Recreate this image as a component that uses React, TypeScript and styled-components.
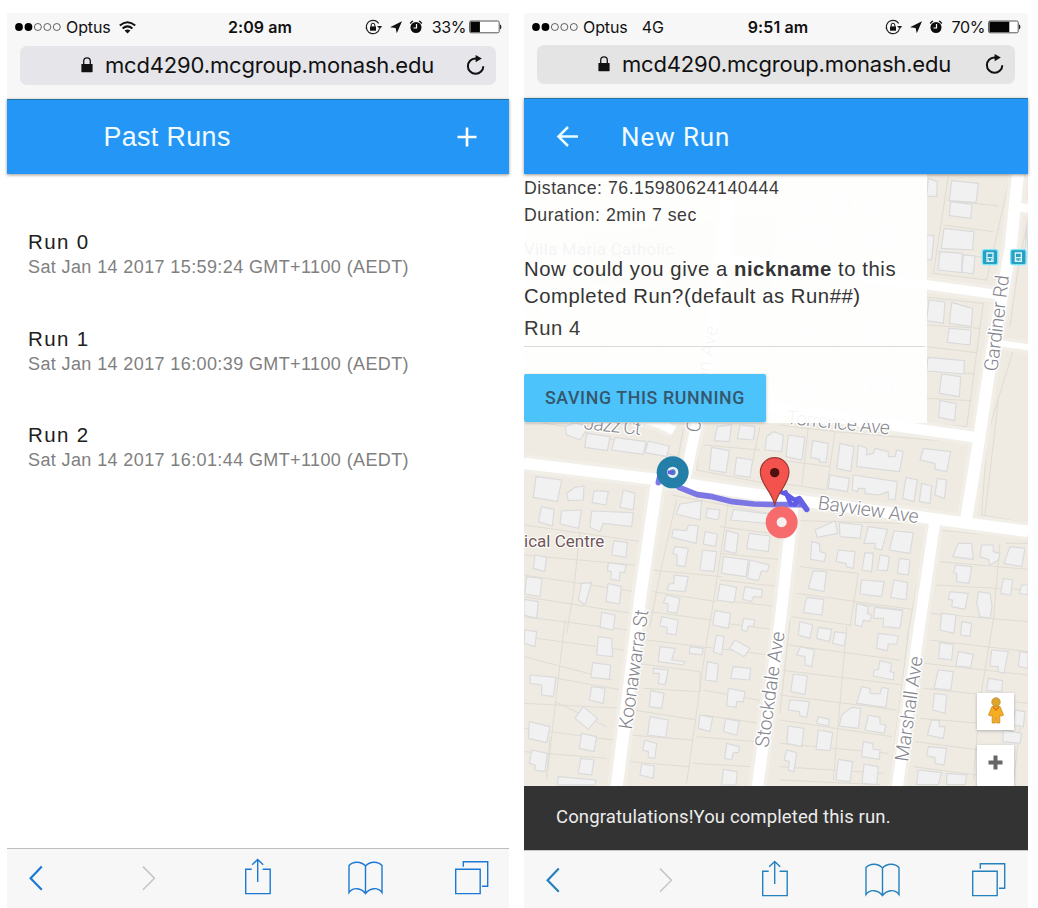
import React from "react";
import styled, { createGlobalStyle } from "styled-components";

const Global = createGlobalStyle`
  * { box-sizing: border-box; }
  body { margin: 0; background: #fff; }
`;

const Page = styled.main`
  width: 1038px;
  height: 908px;
  display: flex;
  gap: 15px;
  padding: 13px 0 0 7px;
  overflow: hidden;
  font-family: "Liberation Sans", Arial, sans-serif;
`;

const Phone = styled.section<{ $width: number }>`
  width: ${(p) => p.$width}px;
  height: 895px;
  display: flex;
  flex-direction: column;
  flex: none;
  background: #fff;
`;

const BrowserHeader = styled.header<{ $height: number }>`
  height: ${(p) => p.$height}px;
  flex: none;
  background: #f7f7f8;
  font-family: Inter, sans-serif;
  color: #111;
`;

const StatusBar = styled.div<{ $height: number }>`
  height: ${(p) => p.$height}px;
  padding: 0 7px 0 8px;
  display: grid;
  grid-template-columns: 1fr auto 1fr;
  align-items: center;
  font-size: 16px;
  line-height: 20px;
  padding-bottom: ${(p) => p.$height - 28}px;
`;

const StatusGroup = styled.div<{ $end?: boolean }>`
  display: flex;
  align-items: center;
  justify-content: ${(p) => (p.$end ? "flex-end" : "flex-start")};
  svg { flex: none; }
`;

const Carrier = styled.span`
  margin-left: 5px;
  letter-spacing: -0.1px;
`;

const Network = styled.span`
  margin-left: 14px;
`;

const Clock = styled.span`
  font-weight: 600;
  margin-left: 3px;
  letter-spacing: 0.1px;
`;

const Percent = styled.span`
  margin: 0 3px 0 9px;
  letter-spacing: -0.4px;
`;

const AddressBar = styled.div<{ $fill: string }>`
  margin: 0 13px;
  height: 39px;
  border-radius: 7px;
  background: ${(p) => p.$fill};
  display: flex;
  align-items: center;
  padding: 0 11px 2px 61px;
  font-size: 22px;
`;

const Address = styled.span`
  margin-left: 12px;
  flex: 1;
  white-space: nowrap;
  letter-spacing: -0.17px;
`;

const AppBar = styled.div<{ $height: number }>`
  height: ${(p) => p.$height}px;
  flex: none;
  position: relative;
  z-index: 2;
  display: flex;
  align-items: center;
  background: #2496f5;
  border-top: 1px solid #23759f;
  box-shadow: 0 1px 3px rgba(60, 50, 40, 0.5);
  color: #f1fbff;
`;

const PastTitle = styled.h1`
  margin: 0 auto 0 96.5px;
  font-size: 26.8px;
  font-weight: 400;
  letter-spacing: 0.4px;
`;

const NewTitle = styled.h1`
  margin: 0 0 0 42px;
  font-family: Roboto, sans-serif;
  font-size: 26px;
  font-weight: 400;
  letter-spacing: 0.9px;
`;

const AddIcon = styled.svg`
  margin-right: 32px;
`;

const BackIcon = styled.svg`
  margin-left: 32px;
`;

const RunList = styled.ul`
  flex: 1;
  margin: 0;
  padding: 55px 0 0 21px;
  list-style: none;
`;

const RunItem = styled.li`
  height: 96.5px;
`;

const RunName = styled.div`
  font-size: 20.5px;
  line-height: 25px;
  letter-spacing: 1.35px;
  color: #202020;
`;

const RunDate = styled.div`
  margin-top: 1px;
  font-size: 18px;
  line-height: 24px;
  letter-spacing: 0.39px;
  color: #808080;
`;

const ToolBar = styled.nav<{ $line: string }>`
  flex: none;
  display: grid;
  grid-template-columns: 113px 103px 103px 107px 40px;
  padding: 9px 0 0 22px;
  border-top: 1px solid ${(p) => p.$line};
  background: #f7f7f7;
`;

const RunToolBar = styled(ToolBar)`
  height: 58px;
  color: #2581bd;
`;

const PastToolBar = styled(ToolBar)`
  height: 60px;
  color: #1b79d4;
`;

const MapArea = styled.div`
  position: relative;
  height: 612px;
  flex: none;
  overflow: hidden;
`;

const MapDrawing = styled.svg`
  display: block;
`;

const RunPanel = styled.div`
  position: absolute;
  left: 0;
  top: 0;
  width: 403px;
  height: 249px;
  padding-top: 1px;
  background: rgba(255, 255, 255, 0.92);
  color: #3b3b3b;
  white-space: nowrap;
`;

const Stat = styled.div`
  font-size: 17.7px;
  line-height: 27px;
  letter-spacing: 0.53px;
`;

const Question = styled.p`
  margin: 27px 0 0;
  font-size: 20.3px;
  line-height: 27px;
  letter-spacing: 0.55px;
  color: #343434;
`;

const NameField = styled.div`
  font-size: 20.3px;
  line-height: 36px;
  letter-spacing: 0.57px;
  width: 401px;
  border-bottom: 1px solid #dadada;
`;

const SaveButton = styled.button`
  display: block;
  margin: 27px 0 0;
  width: 242px;
  height: 48px;
  border: 0;
  border-radius: 2px;
  background: #4dc3fc;
  box-shadow: 0 1px 3px rgba(0, 0, 0, 0.3);
  color: #35576c;
  font: 500 17.8px Roboto, sans-serif;
  padding: 0 0 1px;
  letter-spacing: 0.6px;
`;

const MapControl = styled.div<{ $top: number; $height: number }>`
  position: absolute;
  right: 14px;
  top: ${(p) => p.$top}px;
  width: 37px;
  height: ${(p) => p.$height}px;
  display: flex;
  justify-content: center;
  background: #fff;
  box-shadow: 0 1px 3px rgba(0, 0, 0, 0.25);
`;

const Snackbar = styled.div`
  height: 64px;
  flex: none;
  display: flex;
  align-items: center;
  padding: 0 0 2px 32px;
  background: #333;
  color: #ececec;
  font: 400 18.5px Roboto, sans-serif;
  letter-spacing: 0.12px;
`;

const Signal = () => (
  <svg width="46" height="10" viewBox="0 0 46 10">
    {[0, 1, 2, 3, 4].map((i) => (
      <circle key={i} cx={4 + i * 9.45} cy="5" r={i < 2 ? 3.9 : 3.5} fill={i < 2 ? "#000" : "none"} stroke="#222" strokeWidth={i < 2 ? 0 : 0.7} />
    ))}
  </svg>
);

const WifiIcon = styled.svg`
  margin-left: 8px;
`;

const Wifi = () => (
  <WifiIcon width="17" height="13" viewBox="0 0 17 13" fill="none" stroke="#111" strokeWidth="2">
    <path d="M.8 4.500Q8.500-2 16.200 4.500" />
    <path d="M3.600 7.500Q8.500 3.300 13.400 7.500" />
    <path d="M8.500 12.500L5.600 9.600Q8.500 7.400 11.400 9.600Z" fill="#111" stroke="none" />
  </WifiIcon>
);

const StatusIcons = () => (
  <svg width="58" height="16" viewBox="0 0 58 16">
    <circle cx="8" cy="8" r="6.700" fill="none" stroke="#222" strokeWidth="1.200" strokeDasharray="36 6.100" transform="rotate(18 8 8)" />
    <path d="M12.200 7h5l-2.500 3.200z" fill="#222" />
    <rect x="5" y="7.400" width="6" height="4.300" fill="#111" />
    <path d="M6.200 7.500V6a1.800 1.800 0 0 1 3.600 0v1.500" fill="none" stroke="#111" strokeWidth="1" />
    <path d="M25 8.300L37 2.300 31.800 14.200 30.600 8.900Z" fill="#111" />
    <circle cx="51" cy="8.500" r="5.500" fill="#0b0b0b" />
    <path d="M45.300 4.600A5 5 0 0 1 48 2.100M54 2.100a5 5 0 0 1 2.700 2.500" stroke="#111" strokeWidth="1.300" fill="none" />
    <path d="M51.500 5v4h-3" stroke="#fff" strokeWidth="1.200" fill="none" />
  </svg>
);

const Battery = ({ level }: { level: number }) => (
  <svg width="33" height="14" viewBox="0 0 33 14">
    <rect x=".6" y="1" width="29.600" height="11.800" rx="1.500" fill="#fff" stroke="#555" strokeWidth="1" />
    <rect x="1.400" y="1.700" width={28 * level} height="10.400" fill="#050505" />
    <path d="M31 4.600c1.800.4 1.800 4.400 0 4.800z" fill="#222" />
  </svg>
);

const Lock = () => (
  <svg width="12" height="16" viewBox="0 0 12 16">
    <rect x=".4" y="7" width="11.200" height="8.200" rx=".6" fill="#111" />
    <path d="M2.700 7.500V4.200a3.300 3.300 0 0 1 6.600 0v3.300" fill="none" stroke="#111" strokeWidth="1.300" />
  </svg>
);

const Reload = () => (
  <svg width="19" height="22" viewBox="0 0 19 22">
    <path d="M11 4.400H9.400a7.700 7.700 0 1 0 7.900 7.800" fill="none" stroke="#111" strokeWidth="2" />
    <path d="M9.600 .9L15.800 4.600 9.600 8.200Z" fill="#111" />
  </svg>
);

function Header({ height, statusHeight, fill, time, network, percent, level }: {
  height: number; statusHeight: number; fill: string; time: string; network?: string; percent: string; level: number;
}) {
  return (
    <BrowserHeader $height={height}>
      <StatusBar $height={statusHeight}>
        <StatusGroup>
          <Signal />
          <Carrier>Optus</Carrier>
          {network ? <Network>{network}</Network> : <Wifi />}
        </StatusGroup>
        <Clock>{time}</Clock>
        <StatusGroup $end>
          <StatusIcons />
          <Percent>{percent}</Percent>
          <Battery level={level} />
        </StatusGroup>
      </StatusBar>
      <AddressBar $fill={fill}>
        <Lock />
        <Address>mcd4290.mcgroup.monash.edu</Address>
        <Reload />
      </AddressBar>
    </BrowserHeader>
  );
}

const ToolIcon = ({ d, color = "currentColor", w = 1.4 }: { d: string; color?: string; w?: number }) => (
  <svg width="36" height="38" viewBox="0 0 36 38" fill="none" stroke={color} strokeWidth={w}>
    <path d={d} />
  </svg>
);

const ToolIcons = () => (
  <>
    <ToolIcon w={2.200} d="M12.800 8.600L1.600 20.200 12.800 31.800" />
    <ToolIcon w={1.600} color="#c6c6c8" d="M1 8.600L12.400 20.200 1 31.800" />
    <ToolIcon d="M6.700 11.300H.7V35.600H25.200V11.300H17.600M12.700 24V1.800M7.200 6.800L12.700 1.400 18.200 6.800" />
    <ToolIcon d="M1 7.500C5 3 13 3 17.500 8 22 3 30 3 34 7.500V34.500C30 29 22 29.500 17.500 35.500 13 29.500 5 29 1 34.500ZM17.500 8V35" />
    <ToolIcon d="M.7 11.300H25.200V35.600H.7ZM8.300 8.800V3.700H32.700V28.200H27" />
  </>
);

type Tile = { x: number; y: number; lots: string; houses: string[] };

const tiles: Tile[] = [
  {
    x: 768, y: -12,
    lots: "M505 20L460 310L620 330L690 20M500 90L655 108M490 165L640 185M475 245L635 265M440 382L610 400L560 770L440 760M440 465L600 475M440 530L590 548M440 600L585 612M440 685L575 692M545 250V310M744 150L715 290L690 470M700 540L620 800",
    houses: ["515,32 595,40 588,98 508,92", "512,95 576,103 572,145 508,137", "492,175 582,185 578,240 484,235", "480,245 547,250 545,308 474,300", "550,255 585,258 580,312 546,306", "440,195 462,197 455,270 440,268", "447,390 495,396 490,460 440,452", "515,397 578,415 574,470 508,460", "507,475 573,480 570,525 502,517", "444,562 553,572 552,612 440,603", "485,612 542,620 538,680 478,670", "480,692 528,700 524,752 476,742", "445,25 472,35 470,80 440,78", "740,165 744,260 735,260"],
  },
  {
    x: -12, y: 678,
    lots: "M12 60L140 80M190 95L475 170L490 85M12 212L395 262L345 610M12 375L365 425M180 395L160 580L140 700M12 465L345 495M12 525L345 575M12 590L335 640M12 650L325 690M395 510L605 530M400 575L590 605M390 635L575 660M545 70L530 210L790 260M720 80L690 220M550 135L720 150M455 285L800 350M470 300L420 520L390 680M625 310L575 640L560 720M600 380L790 405M600 460L790 480M600 540L780 560M595 600L775 620M580 665L770 690",
    houses: ["200,100 270,110 262,152 194,142", "285,112 378,125 370,163 275,150", "385,123 448,138 440,170 375,158", "135,80 165,68 205,80 180,120 140,105", "592,80 635,74 628,125 583,122", "660,75 705,80 700,120 652,116", "575,142 628,152 618,218 568,210", "650,172 698,180 690,232 643,225", "740,110 760,95 790,105 785,155 735,150", "48,230 125,240 112,305 40,292", "165,262 192,258 190,300 145,302 140,280", "222,272 265,275 258,315 216,308", "310,270 345,280 340,330 300,322", "65,320 102,328 98,378 55,365", "125,333 184,330 176,385 120,372", "215,333 340,338 335,380 250,370 240,395 210,382", "282,422 322,428 318,472 275,465", "45,465 80,472 74,515 40,505", "265,488 318,495 314,518 300,516 298,542 272,538 274,515 262,512", "20,530 66,535 60,590 14,582", "185,550 215,548 195,615 175,600", "264,550 304,560 298,612 258,605", "12,598 55,605 50,655 12,645", "245,637 285,645 280,690 240,682", "480,312 545,302 540,360 468,342", "562,325 600,330 594,360 558,352", "640,328 765,345 755,372 632,360", "505,375 535,378 528,430 455,412 460,388 500,392", "555,395 592,402 586,440 550,432", "620,392 655,402 648,460 612,452", "688,400 750,408 745,455 680,445", "465,440 505,445 495,500 470,496 472,465 458,460", "548,450 590,455 582,515 540,510", "610,470 685,480 678,530 605,520", "690,480 748,495 742,515 725,512 715,542 682,535", "462,525 505,530 495,575 440,570 448,552 462,550", "600,552 650,562 642,608 592,600", "675,560 728,570 724,592 700,590 695,605 668,598", "440,585 480,595 470,640 442,635 445,612 430,608", "585,632 632,640 625,685 578,675", "670,655 705,660 700,680 685,678 680,695 665,690", "425,650 475,660 468,705 440,700 442,682 420,678"],
  },
  {
    x: 768, y: 678,
    lots: "M0 75L165 95L140 270L0 250M85 80L65 260M165 95L575 130L540 350M0 180L150 200M620 0V130L605 345L744 370M655 0L615 345M60 362L445 372L380 720M60 500L235 520L210 680M50 580L410 630M35 650L210 675M475 390L744 415M475 390L440 650L430 720M480 485L744 508M470 555L744 570M660 430L640 660M450 640L744 665M675 430H744M225 610L370 630",
    houses: ["25,105 75,112 65,180 18,170", "98,122 145,130 138,188 118,185 120,178 92,172", "180,130 222,140 212,215 170,205", "235,135 260,145 260,165 280,160 285,145 325,155 325,170 345,170 350,150 370,155 358,215 230,200", "150,225 208,235 202,275 145,265", "220,225 352,245 345,300 325,297 325,275 295,285 255,280 255,265 235,265 232,275 217,270", "378,232 412,240 402,305 368,295", "430,145 512,155 500,215 465,208 465,190 420,180", "425,250 455,258 450,310 418,305", "472,235 500,240 493,295 465,285", "105,390 165,362 173,400 112,412", "178,368 247,375 240,415 180,410", "265,380 323,388 305,450 285,445 285,430 252,430", "342,393 400,398 390,460 328,450", "95,425 118,430 120,455 138,460 133,485 92,478", "175,450 225,455 220,505 200,500 198,490 168,485", "255,458 280,460 275,515 246,510", "300,465 328,470 322,512 292,510", "358,475 390,480 385,525 352,520", "100,512 140,515 132,575 85,565", "245,540 312,545 305,590 240,582", "342,540 383,548 378,600 332,592", "80,592 132,598 125,645 70,638", "230,610 265,620 262,640 275,645 270,665 250,660 245,680 225,675", "285,622 368,632 360,685 310,680 310,655 280,655", "535,430 575,430 580,478 518,470", "605,435 640,435 640,455 660,460 655,480 630,495 625,478 600,470", "690,440 735,445 725,500 672,490", "528,495 575,500 567,550 530,545 530,520 520,518", "510,575 565,580 555,628 515,620 518,600 505,598", "595,575 630,580 636,620 630,655 600,650 590,610", "670,535 698,540 692,585 662,580", "725,555 744,555 744,585 718,580", "485,640 528,645 522,700 480,690", "545,665 575,670 570,710 542,705"],
  },
  {
    x: -12, y: 1338,
    lots: "M12 50L345 95M135 0L80 480M12 110L280 180M110 175L305 210M12 250L310 265M105 245L260 320M12 325L280 360M90 350L80 470M12 395L260 415M380 60L790 110M350 130L540 155L540 215L370 205M560 60L500 490M340 270L530 300M325 345L520 360M330 425L505 440M550 210L740 245M550 285L720 310M530 350L710 365M520 430L690 440",
    houses: ["235,50 275,55 278,110 230,105", "15,30 50,35 45,80 12,70", "218,128 272,135 268,178 213,172", "30,165 108,172 100,230 65,225 65,195 30,190", "215,200 255,205 250,250 208,240", "190,260 232,295 205,328 165,295", "28,305 90,320 80,368 25,355", "185,340 230,350 222,395 178,385", "35,390 82,400 75,455 45,450 45,435 28,430", "182,415 222,420 215,465 175,460", "115,470 228,480 225,495 112,495", "420,80 465,85 455,120 495,125 490,135 415,125", "400,145 445,150 435,195 415,190 418,160 400,160", "392,212 432,220 425,265 388,260", "390,290 445,300 437,352 383,345", "375,360 410,370 405,415 385,412 385,395 368,390", "365,432 403,438 400,475 360,465", "510,80 550,85 545,105 508,100", "590,45 612,50 605,105 580,95", "645,60 690,85 672,110 628,85", "562,125 595,132 590,185 556,180", "640,140 692,145 688,180 632,175", "625,205 675,215 670,245 650,245 648,262 620,258", "540,285 578,292 570,335 535,325", "618,295 658,305 650,345 610,335", "620,370 658,380 655,398 640,398 635,420 614,415", "610,448 652,455 648,495 605,495"],
  },
  {
    x: 768, y: 1338,
    lots: "M30 0L0 280M25 75L360 120M0 150L370 195M0 225L350 270M0 300L335 350M0 370L325 400M0 440L310 460M0 480L300 494M200 20L160 480M385 40L330 480M450 60L744 95M435 130L744 165M430 205L620 225M420 295L600 310M405 365L600 390M400 440L590 465M640 0L600 240L580 480M600 235L744 250M720 320L700 490",
    houses: ["60,5 98,15 90,55 55,45", "115,22 155,28 148,65 110,55", "165,35 200,40 192,78 158,70", "295,40 355,48 350,72 325,72 322,92 290,85", "62,80 103,90 95,140 75,135 75,110 50,105", "40,162 82,168 75,223 32,215", "300,122 335,130 330,155 342,158 340,180 280,168 282,150 295,150", "245,200 270,205 270,220 300,222 305,203 325,205 318,262 230,250", "30,240 88,245 80,292 60,288 58,275 25,270", "215,262 242,265 235,325 178,318 185,285", "115,290 148,298 145,318 110,310", "265,285 300,292 300,312 318,315 312,340 255,330", "25,318 72,325 65,380 20,370", "115,330 158,338 150,392 108,388", "250,365 278,370 280,388 300,390 298,418 245,410", "20,390 50,398 42,455 25,450 28,425 12,420", "175,418 218,425 210,485 168,480", "252,432 295,440 290,494 246,490", "480,68 520,73 515,120 476,115", "535,95 580,103 572,142 528,138", "475,150 520,155 512,210 462,205", "463,220 500,225 495,280 458,270", "455,300 478,302 478,320 495,320 490,355 442,345", "445,380 500,385 492,435 465,430 465,412 440,408", "635,90 685,95 672,160 655,155 655,140 630,138", "720,95 744,98 744,145 715,138", "625,175 668,182 665,215 620,212", "705,270 735,275 730,320 700,315", "670,330 725,340 720,370 668,365", "415,450 485,458 475,494 410,494", "500,460 560,465 555,494 500,494"],
  },
  {
    x: -12, y: -12,
    lots: "M12 400L800 520M300 80L240 700M480 80L400 700M800 50L740 700M12 560L700 660M1000 40L940 720M1160 60L1110 720M760 200L1200 260M740 380L1180 440M740 560L1180 600",
    houses: ["60,380 130,390 120,440 50,430", "240,560 360,575 350,620 230,605", "830,80 880,85 875,140 825,135", "930,70 990,80 980,130 925,120", "1030,80 1090,90 1080,150 1020,140", "820,160 870,165 860,230 815,220", "900,170 940,175 930,235 890,230", "1060,170 1130,180 1120,240 1050,225", "830,460 880,465 875,510 825,505", "1040,460 1100,465 1090,520 1030,510", "860,630 910,640 900,690 850,680", "1060,620 1120,630 1110,680 1050,670"],
  },
];

const roads = [
  { d: "M0 868L390 915L770 972L1310 1045L1512 1072", w: 34 },
  { d: "M400 920L350 1260L278 1840", w: 36 },
  { d: "M483 915L520 740L575 400L620 0", w: 32 },
  { d: "M808 990L770 1330L700 1840", w: 34 },
  { d: "M1232 1045L1180 1400L1120 1840", w: 33 },
  { d: "M1482 0L1460 220L1400 560L1360 830L1325 1045", w: 36 },
  { d: "M500 660L900 725L1370 792", w: 32 },
  { d: "M600 260L1205 332L1420 362", w: 28 },
  { d: "M1470 96L1512 104", w: 26 },
  { d: "M1410 505L1512 520", w: 18 },
  { d: "M210 755Q330 700 450 770", w: 28 },
];

const RoadMap = () => (
  <MapDrawing width="504" height="612" viewBox="0 0 1512 1836" fontFamily="Roboto, sans-serif">
    <rect width="1512" height="1836" fill="#efebe3" />
    <path d="M180 180L760 120L740 350L190 330Z" fill="#e4e6cc" />
    {tiles.map((t) => (
      <g key={`${t.x}-${t.y}`} transform={`translate(${t.x} ${t.y})`} strokeLinejoin="round">
        <path d={t.lots} fill="none" stroke="#dfdcd4" strokeWidth="3" />
        {t.houses.map((h) => <polygon key={h} points={h} fill="#f1f1f1" stroke="#dadadb" strokeWidth="3.500" />)}
      </g>
    ))}
    {roads.map((r) => <path key={r.d} d={r.d} fill="none" stroke="#f2efe9" strokeWidth={r.w + 20} />)}
    {roads.map((r) => <path key={r.d} d={r.d} fill="none" stroke="#fff" strokeWidth={r.w} />)}
    <g fill="#85858d" fontSize="58" fontWeight="300" stroke="#fff" strokeWidth="8" paintOrder="stroke" strokeLinejoin="round">
      <text transform="translate(880 1005) rotate(8)" textLength="304">Bayview Ave</text>
      <text transform="translate(323 1668) rotate(-82)" textLength="362">Koonawarra St</text>
      <text transform="translate(733 1722) rotate(-82)" textLength="350">Stockdale Ave</text>
      <text transform="translate(1152 1765) rotate(-82)" textLength="318">Marshall Ave</text>
      <text transform="translate(1420 594) rotate(-83)" textLength="290">Gardiner Rd</text>
      <text transform="translate(785 749) rotate(6)" textLength="312">Torrence Ave</text>
      <text transform="translate(178 765) rotate(6)" textLength="172">Jazz Ct</text>
      <text transform="translate(526 778) rotate(-80)">Corrigan Ave</text>
    </g>
    <text x="0" y="1118" fontSize="51" fill="#6f5657" stroke="#fff" strokeWidth="6" paintOrder="stroke" textLength="241">ical Centre</text>
    <text x="0" y="242" fontSize="50" fill="#7a6a7a" textLength="450">Villa Maria Catholic</text>
    {[1398, 1483].map((cx) => (
      <g key={cx} transform={`translate(${cx} 249)`}>
        <rect x="-25" y="-24" width="50" height="49" rx="9" fill="#79e6fb" />
        <rect x="-21" y="-20" width="42" height="41" rx="4" fill="#2c9fc0" />
        <path d="M-9-12H9V13H-9Z" fill="none" stroke="#d6faff" strokeWidth="4" />
        <path d="M-8 2H8M-6 9H-3M3 9H6" stroke="#d6faff" strokeWidth="4" />
      </g>
    ))}
    <path d="M403 926L408 905M465 940L520 962L565 968L625 983L690 990L760 992L830 992" fill="none" stroke="#6762e4" strokeOpacity=".85" strokeWidth="17" strokeLinecap="round" strokeLinejoin="round" />
    <path d="M762 950L790 962L812 978L826 972L848 1006M785 955L800 990M826 974L812 992" fill="none" stroke="#5f5be6" strokeWidth="13" strokeLinecap="round" strokeLinejoin="round" />
    <path d="M828 978L848 1006" stroke="#6762e4" strokeWidth="17" strokeLinecap="round" />
    <circle cx="446" cy="895" r="48" fill="#247fa8" />
    <circle cx="446" cy="895" r="13" fill="#4686ba" stroke="#eceffa" strokeWidth="8" />
    <path d="M431 895H448" stroke="#645fe0" strokeWidth="11" />
    <circle cx="773" cy="1045" r="31" fill="none" stroke="#f76b6d" strokeWidth="34" />
    <circle cx="773" cy="1045" r="15" fill="#f5efed" />
    <path d="M752 996C748 955 709 933 709 894A43 43 0 0 1 795 894C795 933 757 955 752 996Z" fill="#f4534d" stroke="#9c3936" strokeWidth="3.500" />
    <circle cx="752" cy="896" r="14" fill="#4e1010" />
  </MapDrawing>
);

const Pegman = styled.svg`
  margin-top: 4px;
`;

const ZoomIn = styled.svg`
  margin-top: 10px;
`;

const runs = [
  ["Run 0", "Sat Jan 14 2017 15:59:24 GMT+1100 (AEDT)"],
  ["Run 1", "Sat Jan 14 2017 16:00:39 GMT+1100 (AEDT)"],
  ["Run 2", "Sat Jan 14 2017 16:01:44 GMT+1100 (AEDT)"],
];

export default function App() {
  return (
    <Page>
      <Global />
      <Phone $width={502}>
        <Header height={86} statusHeight={33} fill="#e5e5ea" time="2:09 am" percent="33%" level={0.34} />
        <AppBar $height={75}>
          <PastTitle>Past Runs</PastTitle>
          <AddIcon width="20" height="20" viewBox="0 0 20 20" stroke="#fff" strokeWidth="2.600">
            <path d="M.5 10H19.500M10 .5V19.500" />
          </AddIcon>
        </AppBar>
        <RunList>
          {runs.map(([name, date]) => (
            <RunItem key={name}>
              <RunName>{name}</RunName>
              <RunDate>{date}</RunDate>
            </RunItem>
          ))}
        </RunList>
        <PastToolBar $line="#bdbdbf">
          <ToolIcons />
        </PastToolBar>
      </Phone>
      <Phone $width={504}>
        <Header height={85} statusHeight={32} fill="#e4e4e4" time="9:51 am" network="4G" percent="70%" level={0.71} />
        <AppBar $height={76}>
          <BackIcon width="23" height="22" viewBox="0 0 23 22" fill="none" stroke="#e9fbff" strokeWidth="2.500">
            <path d="M22 10.500H3M12 1L2.500 10.500 12 20" />
          </BackIcon>
          <NewTitle>New Run</NewTitle>
        </AppBar>
        <MapArea>
          <RoadMap />
          <RunPanel>
            <Stat>Distance: 76.15980624140444</Stat>
            <Stat>Duration: 2min 7 sec</Stat>
            <Question>
              Now could you give a <b>nickname</b> to this
              <br />
              Completed Run?(default as Run##)
            </Question>
            <NameField>Run 4</NameField>
            <SaveButton>SAVING THIS RUNNING</SaveButton>
          </RunPanel>
          <MapControl $top={519} $height={37}>
            <Pegman width="18" height="28" viewBox="0 0 18 28">
              <path d="M5 9.500Q9 8 13 9.500L16.500 18 14.500 19 12.800 18V26H9.700V21H8.300V26H5.200V18L3.500 19 1.500 18Z" fill="#f6ad20" stroke="#c98a1e" strokeWidth=".8" />
              <circle cx="9" cy="5" r="4.200" fill="#dfa62e" stroke="#b98a2b" strokeWidth=".8" />
              <path d="M6 10L9 13 12 10" fill="none" stroke="#e0701c" strokeWidth="1.300" />
            </Pegman>
          </MapControl>
          <MapControl $top={571} $height={50}>
            <ZoomIn width="15" height="15" viewBox="0 0 15 15" stroke="#666" strokeWidth="4">
              <path d="M.5 7.500H14.500M7.500 .5V14.500" />
            </ZoomIn>
          </MapControl>
        </MapArea>
        <Snackbar>Congratulations!You completed this run.</Snackbar>
        <RunToolBar $line="#c9c9c9">
          <ToolIcons />
        </RunToolBar>
      </Phone>
    </Page>
  );
}
